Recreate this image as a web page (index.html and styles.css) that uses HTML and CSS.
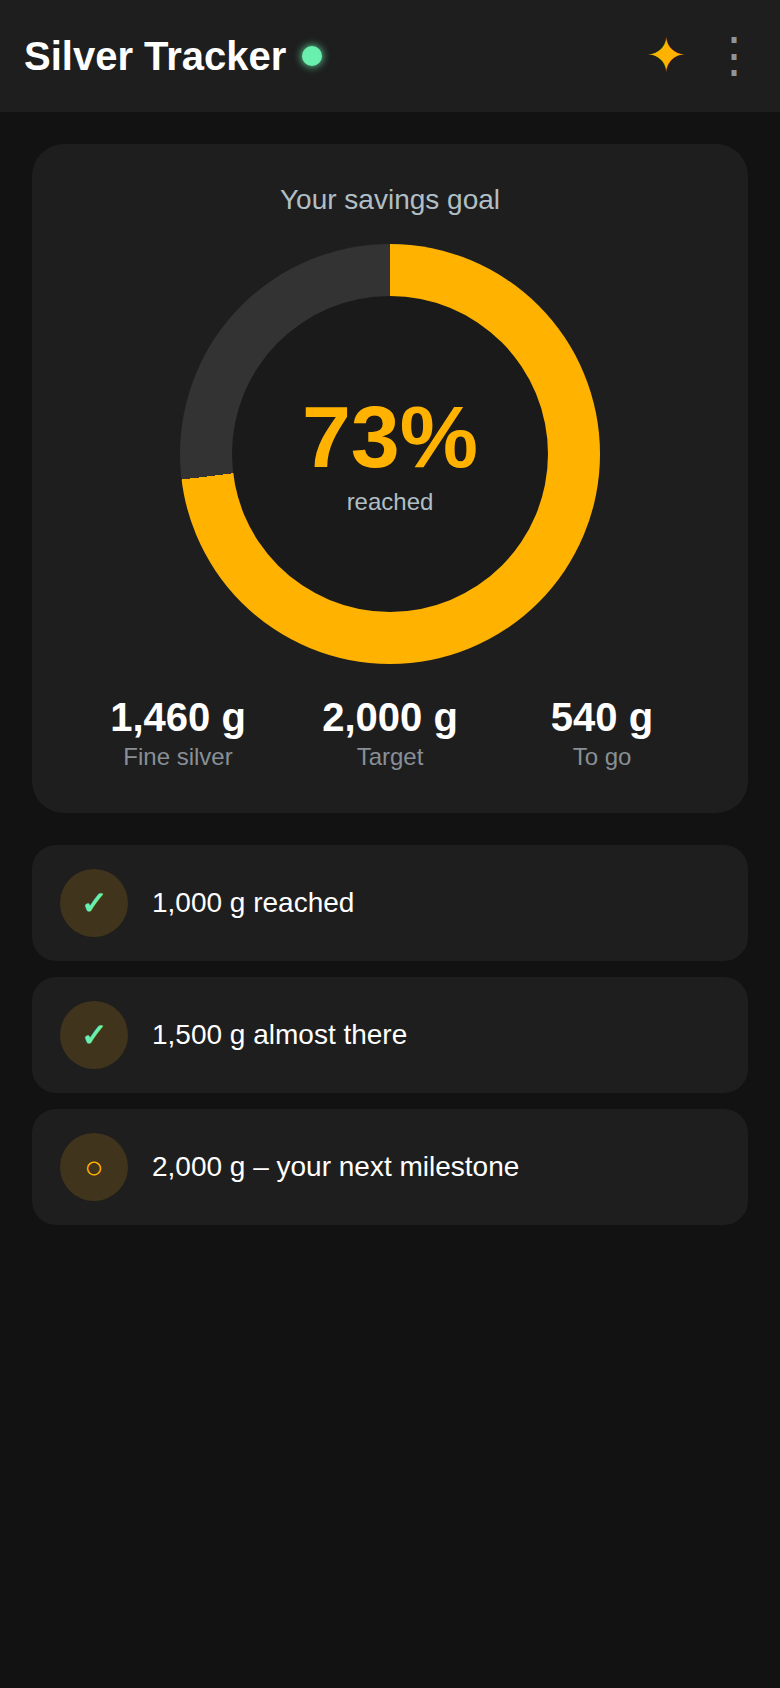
FILE: index.html
```html
<!DOCTYPE html>
<html lang="en">
<head>
  <meta charset="UTF-8">
  <title>Silver Tracker</title>
  <link rel="stylesheet" href="styles.css">
</head>
<body>

<header class="topbar">
  <div class="brand">
    <h1>Silver Tracker</h1>
    <span class="status-dot"></span>
  </div>
  <div class="actions">
    <span class="spark">✦</span>
    <span class="more">⋮</span>
  </div>
</header>

<main class="content">
  <section class="goal-card">
    <h2>Your savings goal</h2>
    <div class="ring">
      <div class="ring-hole">
        <strong class="percent">73%</strong>
        <span class="percent-label">reached</span>
      </div>
    </div>
    <div class="stats">
      <div class="stat">
        <strong>1,460 g</strong>
        <span>Fine silver</span>
      </div>
      <div class="stat">
        <strong>2,000 g</strong>
        <span>Target</span>
      </div>
      <div class="stat">
        <strong>540 g</strong>
        <span>To go</span>
      </div>
    </div>
  </section>

  <section class="milestones">
    <div class="milestone">
      <span class="badge done">✓</span>
      <span class="milestone-text">1,000 g reached</span>
    </div>
    <div class="milestone">
      <span class="badge done">✓</span>
      <span class="milestone-text">1,500 g almost there</span>
    </div>
    <div class="milestone">
      <span class="badge next">○</span>
      <span class="milestone-text">2,000 g – your next milestone</span>
    </div>
  </section>
</main>

</body>
</html>
```
FILE: styles.css
```css
* {
  box-sizing: border-box;
}
body {
  margin: 0;
  min-height: 1688px;
  background: #121212;
  color: #fff;
  font-family: "Liberation Sans", Arial, sans-serif;
}
.topbar {
  height: 112px;
  padding: 0 22px 0 24px;
  background: #1e1e1e;
  display: flex;
  align-items: center;
  justify-content: space-between;
}
.brand {
  display: flex;
  align-items: center;
  gap: 16px;
}
h1 {
  margin: 0;
  font-size: 40px;
  font-weight: 700;
}
.status-dot {
  width: 20px;
  height: 20px;
  border-radius: 50%;
  background: #69f0ae;
  box-shadow: 0 0 8px #69f0ae;
}
.actions {
  display: flex;
  align-items: center;
  gap: 24px;
}
.spark {
  color: #ffb300;
  font-size: 48px;
  line-height: 1;
}
.more {
  color: #8e959c;
  font-size: 48px;
  line-height: 1;
}
.content {
  padding: 32px;
}
.goal-card {
  background: #1e1e1e;
  border-radius: 32px;
  padding: 40px 40px 42px;
  display: flex;
  flex-direction: column;
  align-items: center;
}
h2 {
  margin: 0 0 28px;
  font-size: 28px;
  line-height: 32px;
  font-weight: 400;
  color: #b0bec5;
}
.ring {
  width: 420px;
  height: 420px;
  border-radius: 50%;
  background: conic-gradient(#ffb300 0 263deg, #333 263deg 360deg);
  display: flex;
  align-items: center;
  justify-content: center;
}
.ring-hole {
  width: 316px;
  height: 316px;
  border-radius: 50%;
  background: #1a1a1a;
  display: flex;
  flex-direction: column;
  align-items: center;
  justify-content: center;
}
.percent {
  font-size: 88px;
  line-height: 1;
  color: #ffb300;
}
.percent-label {
  margin-top: 7px;
  font-size: 24px;
  line-height: 28px;
  color: #b0bec5;
}
.stats {
  width: 100%;
  margin-top: 30px;
  display: grid;
  grid-template-columns: repeat(3, 1fr);
}
.stat {
  display: flex;
  flex-direction: column;
  align-items: center;
  gap: 3px;
}
.stat strong {
  font-size: 40px;
  line-height: 46px;
}
.stat span {
  font-size: 24px;
  line-height: 28px;
  color: #888f96;
}
.milestones {
  margin-top: 32px;
  display: flex;
  flex-direction: column;
  gap: 16px;
}
.milestone {
  height: 116px;
  padding: 0 28px;
  background: #1e1e1e;
  border-radius: 24px;
  display: flex;
  align-items: center;
  gap: 24px;
}
.badge {
  width: 68px;
  height: 68px;
  border-radius: 50%;
  background: #40341c;
  display: flex;
  align-items: center;
  justify-content: center;
  font-size: 32px;
}
.badge.done {
  color: #69f0ae;
  font-weight: 700;
}
.badge.next {
  color: #ffb300;
}
.milestone-text {
  font-size: 28px;
}
```
